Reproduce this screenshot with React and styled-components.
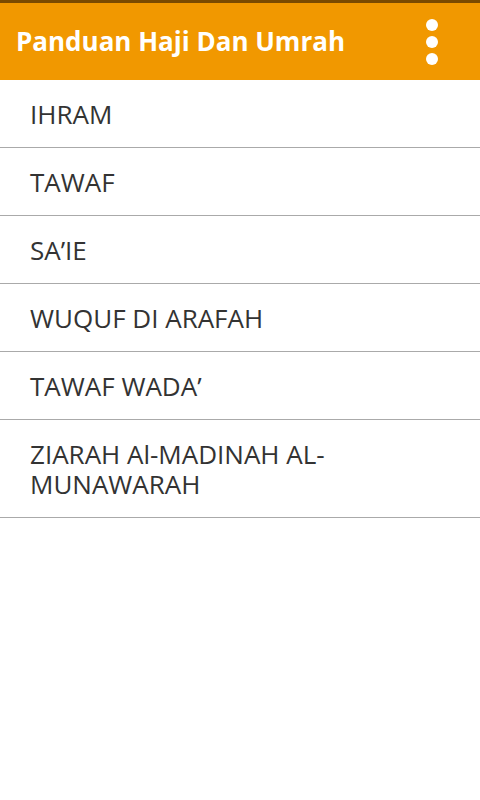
import React from "react";
import styled, { createGlobalStyle } from "styled-components";

const Global = createGlobalStyle`
  html, body { margin: 0; padding: 0; background: #fff; }
  body { font-family: "Open Sans", "Noto Sans", sans-serif; }
`;

const Page = styled.div`
  width: 480px;
  min-height: 800px;
  background: #fff;
`;

const Header = styled.header`
  height: 80px;
  box-sizing: border-box;
  background: #f19800;
  border-top: 3px solid #7a4a00;
  display: flex;
  align-items: center;
  justify-content: space-between;
  padding: 0 42px 2px 16px;
`;

const Title = styled.h1`
  margin: 0;
  color: #fff;
  font-family: "Open Sans", "Noto Sans", sans-serif;
  font-weight: 700;
  font-size: 26px;
  letter-spacing: 0;
`;

const Menu = styled.div`
  display: flex;
  flex-direction: column;
  gap: 5px;
  margin-top: 2px;
`;

const Dot = styled.span`
  width: 12px;
  height: 12px;
  border-radius: 50%;
  background: #fff;
`;

const List = styled.ul`
  list-style: none;
  margin: 0;
  padding: 0;
`;

const Item = styled.li`
  box-sizing: border-box;
  padding: 19px 30px 18px 30px;
  border-bottom: 1px solid #aaa;
  color: #333;
  font-family: "Open Sans", "Noto Sans", sans-serif;
  font-size: 26px;
  line-height: 30px;
`;

const items = [
  "IHRAM",
  "TAWAF",
  "SA\u2019IE",
  "WUQUF DI ARAFAH",
  "TAWAF WADA\u2019",
  "ZIARAH Al-MADINAH AL-MUNAWARAH",
];

export default function App() {
  return (
    <Page>
      <Global />
      <Header>
        <Title>Panduan Haji Dan Umrah</Title>
        <Menu>
          <Dot />
          <Dot />
          <Dot />
        </Menu>
      </Header>
      <List>
        {items.map((t) => (
          <Item key={t}>{t}</Item>
        ))}
      </List>
    </Page>
  );
}
